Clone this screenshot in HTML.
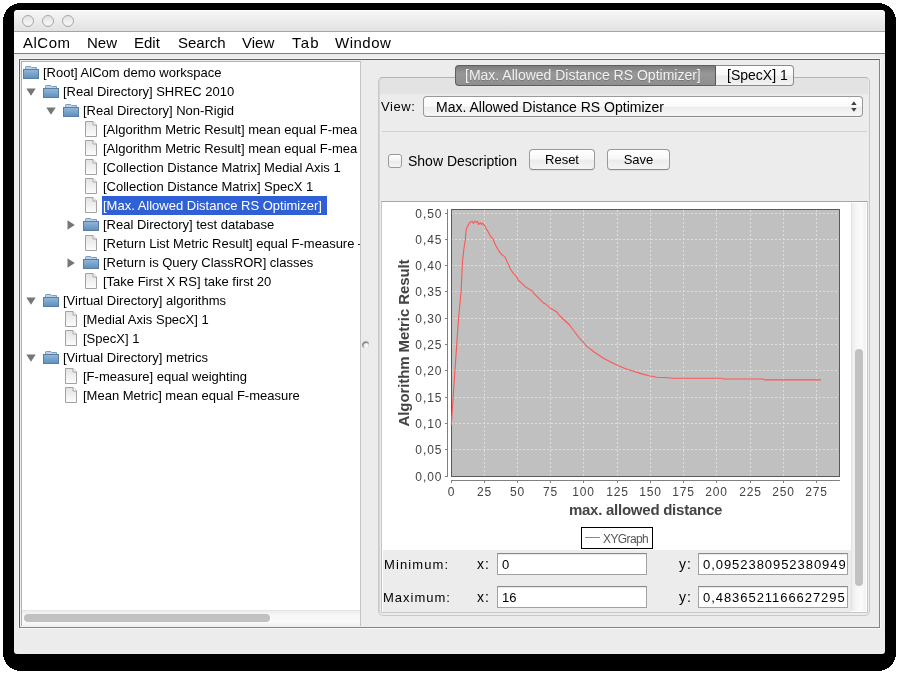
<!DOCTYPE html>
<html><head><meta charset="utf-8">
<style>
*{margin:0;padding:0;box-sizing:border-box}
html,body{width:899px;height:674px;overflow:hidden;background:#fff;font-family:"Liberation Sans",sans-serif;color:#000}
.a{position:absolute}
#shadow{left:3px;top:3px;width:893px;height:668px;background:#000;border-radius:13px}
#win{left:14px;top:10px;width:871px;height:644px;background:#ececec;border-radius:4px 4px 3px 3px;overflow:hidden}
#title{left:14px;top:10px;width:871px;height:21px;background:linear-gradient(#f7f7f7,#e1e1e1);border-radius:4px 4px 0 0;box-shadow:inset 0 1px 0 #fdfdfd}
#titleline{left:14px;top:31px;width:871px;height:1px;background:#a4a4a4}
.circ{width:12px;height:12px;border-radius:50%;border:1px solid #a6a6a6;background:linear-gradient(#e2e2e2,#f4f4f4 70%,#ececec)}
#menubar{left:14px;top:32px;width:871px;height:21px;background:#fff}
#menuline{left:14px;top:53px;width:871px;height:1px;background:#7e7e7e}
.menu{font-size:15px;top:34px;line-height:18px}
/* split pane */
#sp_hl{left:18px;top:58px;width:863px;height:571px;border:1px solid #f7f7f7}
#sp{left:19px;top:59px;width:861px;height:569px;border:1px solid #5e5e5e;border-right-color:#858585;border-bottom-color:#858585}
#tree_o{left:20px;top:60px;width:341px;height:567px;border:1px solid #f0f0f0;border-right:none}
#tree{left:21px;top:61px;width:340px;height:565px;border:1px solid #b0b0b0;border-right:1px solid #c4c4c4;background:#fff;overflow:hidden}
.row{position:absolute;height:19px;font-size:13px;line-height:19px;white-space:nowrap}
.txt{position:absolute;top:0;white-space:nowrap}
.sel{background:#3060d6}
.wt{color:#fff}

/* right */
#tp{left:378px;top:77px;width:492px;height:539px;border:1px solid #c8c8c8;border-top-color:#b4b4b4;border-radius:5px;background:#ececec;box-shadow:inset 1px 1px 0 #d6d6d6}
#tphead{left:380px;top:78px;width:488px;height:16px;background:#e3e3e3;border-radius:4px 4px 0 0}
.tab{top:65px;height:21px;font-size:14px;line-height:18px;text-align:left;white-space:nowrap}
#tab1{left:455px;width:261px;background:linear-gradient(#7d7d7d,#979797 40%,#8f8f8f);border:1px solid #5f5f5f;border-right:1px solid #555;border-radius:4px 0 0 4px;color:#f2f2f2;padding-left:9px;text-shadow:0 1px 0 #7a7a7a}
#tab2{left:716px;width:78px;background:linear-gradient(#fff,#f8f8f8 45%,#ebebeb 55%,#f2f2f2);border:1px solid #8a8a8a;border-left:none;border-radius:0 4px 4px 0;padding-left:11px}
.lbl{font-size:13px;line-height:16px;white-space:nowrap}
#combo{left:423px;top:96px;width:440px;height:21px;border:1px solid #999;border-bottom-color:#8a8a8a;border-radius:4px;background:linear-gradient(#fff,#fbfbfb 45%,#eeeeee 55%,#f6f6f6);box-shadow:0 1px 0 #f6f6f6}
#sep{left:382px;top:131px;width:485px;height:1px;background:#d2d2d2}
#chk{left:388px;top:154px;width:14px;height:14px;border:1px solid #9a9a9a;border-radius:3px;background:linear-gradient(#fff,#f3f3f3 50%,#e9e9e9 55%,#f7f7f7)}
.btn{top:149px;height:21px;border:1px solid #9a9a9a;border-bottom-color:#8a8a8a;box-shadow:0 1px 0 rgba(0,0,0,0.06);border-radius:4px;background:linear-gradient(#fff,#f8f8f8 45%,#ececec 55%,#f4f4f4);font-size:13px;line-height:19px;text-align:center}
#scr{left:381px;top:201px;width:487px;height:412px;border:1px solid #c6c6c6;border-top-color:#a6a6a6;background:#fff}
#chart{left:382px;top:202px;width:469px;height:348px;background:#fff}
#mm{left:383px;top:550px;width:468px;height:62px;background:#ececec}
#vtrack{left:851px;top:203px;width:15px;height:408px;background:linear-gradient(90deg,#ececec,#f6f6f6 30%,#fafafa 70%,#f0f0f0);border-left:1px solid #e2e2e2}
#vthumb{left:855px;top:349px;width:8px;height:237px;border-radius:4px;background:#c1c1c1}
.fld{height:22px;border:1px solid #a2a2a2;border-top-color:#8a8a8a;background:#fff;box-shadow:inset 0 1px 0 #e8e8e8;font-size:13px;line-height:20px;padding-left:4px;padding-top:1px;overflow:hidden;white-space:nowrap}
#htrack{left:22px;top:610px;width:338px;height:16px;background:linear-gradient(#ececec,#f7f7f7 30%,#fafafa 70%,#f1f1f1);border-top:1px solid #e4e4e4}
#hthumb{left:24px;top:614px;width:246px;height:8px;border-radius:4px;background:#c1c1c1}
.tl{font-size:12px;fill:#444;letter-spacing:0.9px}
.al{font-size:15px;font-weight:bold;fill:#444;letter-spacing:-0.25px}
.al2{letter-spacing:-0.1px}
.lg{font-size:12px;fill:#555;letter-spacing:-0.6px}
.fi{width:142px;overflow:hidden;letter-spacing:0.95px}
</style></head><body><div id="root" style="position:absolute;left:0;top:0;width:899px;height:674px;will-change:transform">
<svg class="a" style="left:0;top:0" width="899" height="674"><rect x="3" y="3" width="893" height="668" rx="18" ry="18" fill="#000" shape-rendering="crispEdges"/></svg>
<div class="a" id="win"></div>
<div class="a" id="title"></div>
<div class="a" id="titleline"></div>
<div class="a circ" style="left:22px;top:15px"></div>
<div class="a circ" style="left:42px;top:15px"></div>
<div class="a circ" style="left:62px;top:15px"></div>
<div class="a" id="menubar"></div>
<div class="a" id="menuline"></div>
<div class="a menu" style="left:23px;letter-spacing:0.5px">AlCom</div>
<div class="a menu" style="left:87px">New</div>
<div class="a menu" style="left:134px">Edit</div>
<div class="a menu" style="left:178px">Search</div>
<div class="a menu" style="left:242px">View</div>
<div class="a menu" style="left:292px;letter-spacing:1.2px">Tab</div>
<div class="a menu" style="left:335px;letter-spacing:0.5px">Window</div>

<div class="a" id="sp_hl"></div>
<div class="a" id="sp"></div>
<div class="a" id="tree_o"></div>
<div class="a" id="tree">
<!-- TREE -->
<svg width="0" height="0" style="position:absolute"><defs><linearGradient id="fg" x1="0" y1="0" x2="0" y2="1"><stop offset="0" stop-color="#94b7d8"/><stop offset="1" stop-color="#5c8fc0"/></linearGradient><linearGradient id="pg" x1="0" y1="0" x2="0" y2="1"><stop offset="0" stop-color="#e2e2e2"/><stop offset="1" stop-color="#fdfdfd"/></linearGradient></defs></svg>
<svg class="a" style="left:1px;top:4px" width="16" height="13"><path d="M2.5 3.5V1.2Q2.5 0.5 3.2 0.5H7.8L8.8 1.5H13.5V3.5Z" fill="#b9d2e8" stroke="#7b9cbc"/><rect x="0.5" y="3.5" width="15" height="9" fill="url(#fg)" stroke="#5b7d9e"/></svg>
<div class="row" style="left:21px;top:1px">[Root] AlCom demo workspace</div>
<svg class="a" style="left:4px;top:26px" width="10" height="8"><path d="M0.3 0.5H9.7L5 7.8Z" fill="#767676"/></svg>
<svg class="a" style="left:21px;top:23px" width="16" height="13"><path d="M2.5 3.5V1.2Q2.5 0.5 3.2 0.5H7.8L8.8 1.5H13.5V3.5Z" fill="#b9d2e8" stroke="#7b9cbc"/><rect x="0.5" y="3.5" width="15" height="9" fill="url(#fg)" stroke="#5b7d9e"/></svg>
<div class="row" style="left:41px;top:20px">[Real Directory] SHREC 2010</div>
<svg class="a" style="left:24px;top:45px" width="10" height="8"><path d="M0.3 0.5H9.7L5 7.8Z" fill="#767676"/></svg>
<svg class="a" style="left:41px;top:42px" width="16" height="13"><path d="M2.5 3.5V1.2Q2.5 0.5 3.2 0.5H7.8L8.8 1.5H13.5V3.5Z" fill="#b9d2e8" stroke="#7b9cbc"/><rect x="0.5" y="3.5" width="15" height="9" fill="url(#fg)" stroke="#5b7d9e"/></svg>
<div class="row" style="left:61px;top:39px">[Real Directory] Non-Rigid</div>
<svg class="a" style="left:63px;top:59px" width="12" height="16"><path d="M0.5 0.5H8L11.5 4V15.5H0.5Z" fill="url(#pg)" stroke="#a2a2a2"/><path d="M8 0.5V4H11.5" fill="#fff" stroke="#a2a2a2"/></svg>
<div class="row" style="left:81px;top:58px">[Algorithm Metric Result] mean equal F-mea</div>
<svg class="a" style="left:63px;top:78px" width="12" height="16"><path d="M0.5 0.5H8L11.5 4V15.5H0.5Z" fill="url(#pg)" stroke="#a2a2a2"/><path d="M8 0.5V4H11.5" fill="#fff" stroke="#a2a2a2"/></svg>
<div class="row" style="left:81px;top:77px">[Algorithm Metric Result] mean equal F-mea</div>
<svg class="a" style="left:63px;top:97px" width="12" height="16"><path d="M0.5 0.5H8L11.5 4V15.5H0.5Z" fill="url(#pg)" stroke="#a2a2a2"/><path d="M8 0.5V4H11.5" fill="#fff" stroke="#a2a2a2"/></svg>
<div class="row" style="left:81px;top:96px">[Collection Distance Matrix] Medial Axis 1</div>
<svg class="a" style="left:63px;top:116px" width="12" height="16"><path d="M0.5 0.5H8L11.5 4V15.5H0.5Z" fill="url(#pg)" stroke="#a2a2a2"/><path d="M8 0.5V4H11.5" fill="#fff" stroke="#a2a2a2"/></svg>
<div class="row" style="left:81px;top:115px">[Collection Distance Matrix] SpecX 1</div>
<svg class="a" style="left:63px;top:135px" width="12" height="16"><path d="M0.5 0.5H8L11.5 4V15.5H0.5Z" fill="url(#pg)" stroke="#a2a2a2"/><path d="M8 0.5V4H11.5" fill="#fff" stroke="#a2a2a2"/></svg>
<div class="a sel" style="left:80px;top:134px;width:225px;height:19px"></div>
<div class="row wt" style="left:81px;top:134px">[Max. Allowed Distance RS Optimizer]</div>
<svg class="a" style="left:45px;top:158px" width="8" height="10"><path d="M0.5 0.3V9.7L7.8 5Z" fill="#767676"/></svg>
<svg class="a" style="left:61px;top:156px" width="16" height="13"><path d="M2.5 3.5V1.2Q2.5 0.5 3.2 0.5H7.8L8.8 1.5H13.5V3.5Z" fill="#b9d2e8" stroke="#7b9cbc"/><rect x="0.5" y="3.5" width="15" height="9" fill="url(#fg)" stroke="#5b7d9e"/></svg>
<div class="row" style="left:81px;top:153px">[Real Directory] test database</div>
<svg class="a" style="left:63px;top:173px" width="12" height="16"><path d="M0.5 0.5H8L11.5 4V15.5H0.5Z" fill="url(#pg)" stroke="#a2a2a2"/><path d="M8 0.5V4H11.5" fill="#fff" stroke="#a2a2a2"/></svg>
<div class="row" style="left:81px;top:172px">[Return List Metric Result] equal F-measure – 1</div>
<svg class="a" style="left:45px;top:196px" width="8" height="10"><path d="M0.5 0.3V9.7L7.8 5Z" fill="#767676"/></svg>
<svg class="a" style="left:61px;top:194px" width="16" height="13"><path d="M2.5 3.5V1.2Q2.5 0.5 3.2 0.5H7.8L8.8 1.5H13.5V3.5Z" fill="#b9d2e8" stroke="#7b9cbc"/><rect x="0.5" y="3.5" width="15" height="9" fill="url(#fg)" stroke="#5b7d9e"/></svg>
<div class="row" style="left:81px;top:191px">[Return is Query ClassROR] classes</div>
<svg class="a" style="left:63px;top:211px" width="12" height="16"><path d="M0.5 0.5H8L11.5 4V15.5H0.5Z" fill="url(#pg)" stroke="#a2a2a2"/><path d="M8 0.5V4H11.5" fill="#fff" stroke="#a2a2a2"/></svg>
<div class="row" style="left:81px;top:210px">[Take First X RS] take first 20</div>
<svg class="a" style="left:4px;top:235px" width="10" height="8"><path d="M0.3 0.5H9.7L5 7.8Z" fill="#767676"/></svg>
<svg class="a" style="left:21px;top:232px" width="16" height="13"><path d="M2.5 3.5V1.2Q2.5 0.5 3.2 0.5H7.8L8.8 1.5H13.5V3.5Z" fill="#b9d2e8" stroke="#7b9cbc"/><rect x="0.5" y="3.5" width="15" height="9" fill="url(#fg)" stroke="#5b7d9e"/></svg>
<div class="row" style="left:41px;top:229px">[Virtual Directory] algorithms</div>
<svg class="a" style="left:43px;top:249px" width="12" height="16"><path d="M0.5 0.5H8L11.5 4V15.5H0.5Z" fill="url(#pg)" stroke="#a2a2a2"/><path d="M8 0.5V4H11.5" fill="#fff" stroke="#a2a2a2"/></svg>
<div class="row" style="left:61px;top:248px">[Medial Axis SpecX] 1</div>
<svg class="a" style="left:43px;top:268px" width="12" height="16"><path d="M0.5 0.5H8L11.5 4V15.5H0.5Z" fill="url(#pg)" stroke="#a2a2a2"/><path d="M8 0.5V4H11.5" fill="#fff" stroke="#a2a2a2"/></svg>
<div class="row" style="left:61px;top:267px">[SpecX] 1</div>
<svg class="a" style="left:4px;top:292px" width="10" height="8"><path d="M0.3 0.5H9.7L5 7.8Z" fill="#767676"/></svg>
<svg class="a" style="left:21px;top:289px" width="16" height="13"><path d="M2.5 3.5V1.2Q2.5 0.5 3.2 0.5H7.8L8.8 1.5H13.5V3.5Z" fill="#b9d2e8" stroke="#7b9cbc"/><rect x="0.5" y="3.5" width="15" height="9" fill="url(#fg)" stroke="#5b7d9e"/></svg>
<div class="row" style="left:41px;top:286px">[Virtual Directory] metrics</div>
<svg class="a" style="left:43px;top:306px" width="12" height="16"><path d="M0.5 0.5H8L11.5 4V15.5H0.5Z" fill="url(#pg)" stroke="#a2a2a2"/><path d="M8 0.5V4H11.5" fill="#fff" stroke="#a2a2a2"/></svg>
<div class="row" style="left:61px;top:305px">[F-measure] equal weighting</div>
<svg class="a" style="left:43px;top:325px" width="12" height="16"><path d="M0.5 0.5H8L11.5 4V15.5H0.5Z" fill="url(#pg)" stroke="#a2a2a2"/><path d="M8 0.5V4H11.5" fill="#fff" stroke="#a2a2a2"/></svg>
<div class="row" style="left:61px;top:324px">[Mean Metric] mean equal F-measure</div>
</div>

<!-- RIGHT -->
<div class="a" style="left:362px;top:341px;width:7px;height:7px;border-radius:50%;background:radial-gradient(circle at 62% 68%,#fafafa 0,#f2f2f2 30%,#7a7a7a 58%,rgba(236,236,236,0) 85%)"></div>
<div class="a" id="htrack"></div>
<div class="a" id="hthumb"></div>
<div class="a" id="tp"></div>
<div class="a" id="tphead"></div>
<div class="a tab" id="tab1">[Max. Allowed Distance RS Optimizer]</div>
<div class="a tab" id="tab2">[SpecX] 1</div>
<div class="a lbl" style="left:381px;top:99px;letter-spacing:0.6px">View:</div>
<div class="a" id="combo"></div>
<div class="a lbl" style="left:436px;top:99px;font-size:14px">Max. Allowed Distance RS Optimizer</div>
<svg class="a" style="left:850px;top:100px" width="8" height="13"><path d="M1.2 5L3.9 1.3L6.6 5Z M1.2 8L3.9 11.8L6.6 8Z" fill="#404040"/></svg>
<div class="a" id="sep"></div>
<div class="a" id="chk"></div>
<div class="a lbl" style="left:408px;top:153px;font-size:14px">Show Description</div>
<div class="a btn" style="left:529px;width:66px">Reset</div>
<div class="a btn" style="left:607px;width:63px">Save</div>
<div class="a" id="scr"></div>
<div class="a" id="chart">
<svg class="a" style="left:0;top:0" width="469" height="348" viewBox="382 202 469 348">
<rect x="451" y="209" width="389" height="268" fill="#c0c0c0"/>
<path d="M484.5 210V476M517.5 210V476M550.5 210V476M583.5 210V476M617.5 210V476M650.5 210V476M683.5 210V476M716.5 210V476M750.5 210V476M783.5 210V476M816.5 210V476" stroke="#dedede" stroke-width="1" stroke-dasharray="2 2" fill="none"/>
<path d="M451 449.5H839M451 423.5H839M451 397.5H839M451 370.5H839M451 344.5H839M451 318.5H839M451 291.5H839M451 265.5H839M451 239.5H839M451 213.5H839" stroke="#dedede" stroke-width="1" stroke-dasharray="2 2" fill="none"/>
<rect x="451.5" y="209.5" width="388" height="267" fill="none" stroke="#5a5a5a" stroke-width="1"/>
<path d="M447.5 209V477M451 480.5H840" stroke="#808080" stroke-width="1" fill="none"/>
<path d="M445 476.5H447M445 449.5H447M445 423.5H447M445 397.5H447M445 370.5H447M445 344.5H447M445 318.5H447M445 291.5H447M445 265.5H447M445 239.5H447M445 213.5H447M451.5 481V483M484.5 481V483M517.5 481V483M550.5 481V483M583.5 481V483M617.5 481V483M650.5 481V483M683.5 481V483M716.5 481V483M750.5 481V483M783.5 481V483M816.5 481V483" stroke="#808080" stroke-width="1" fill="none"/>
<polyline points="451.3,425.5 453.5,392.0 456.0,355.0 458.5,319.0 461.2,290.0 462.5,261.4 464.0,248.0 465.0,242.0 466.3,228.9 468.3,224.9 469.7,222.5 472.1,221.3 473.5,223.5 474.6,221.3 476.4,222.3 477.5,221.4 478.4,224.5 480.4,222.7 481.5,224.5 482.6,223.2 484.6,225.6 486.1,228.5 488.8,232.9 490.6,236.5 492.6,238.3 494.2,242.0 495.5,245.0 498.3,250.1 501.9,254.8 504.8,256.6 507.2,262.0 510.8,269.7 513.7,273.8 516.7,276.8 518.5,280.4 525.6,286.9 532.1,291.0 535.1,294.6 538.7,298.2 543.4,302.9 545.8,304.1 550.5,308.2 556.5,311.8 560.0,316.0 564.2,320.0 569.6,325.0 574.0,331.0 578.9,337.5 586.7,346.1 594.5,352.3 603.9,358.5 613.2,363.2 617.9,365.5 625.0,368.5 633.5,371.3 641.0,373.6 649.0,375.7 656.8,377.2 669.3,377.7 672.0,378.2 721.2,378.2 724.1,379.0 763.1,379.0 764.6,379.9 821.0,379.9" fill="none" stroke="#ff5555" stroke-width="1.1" stroke-linejoin="round"/>
<text x="442.3" y="480.6" text-anchor="end" class="tl">0,00</text>
<text x="442.3" y="453.6" text-anchor="end" class="tl">0,05</text>
<text x="442.3" y="427.6" text-anchor="end" class="tl">0,10</text>
<text x="442.3" y="401.6" text-anchor="end" class="tl">0,15</text>
<text x="442.3" y="374.6" text-anchor="end" class="tl">0,20</text>
<text x="442.3" y="348.6" text-anchor="end" class="tl">0,25</text>
<text x="442.3" y="322.6" text-anchor="end" class="tl">0,30</text>
<text x="442.3" y="295.6" text-anchor="end" class="tl">0,35</text>
<text x="442.3" y="269.6" text-anchor="end" class="tl">0,40</text>
<text x="442.3" y="243.6" text-anchor="end" class="tl">0,45</text>
<text x="442.3" y="217.6" text-anchor="end" class="tl">0,50</text>
<text x="451.5" y="495.6" text-anchor="middle" class="tl">0</text>
<text x="484.5" y="495.6" text-anchor="middle" class="tl">25</text>
<text x="517.5" y="495.6" text-anchor="middle" class="tl">50</text>
<text x="550.5" y="495.6" text-anchor="middle" class="tl">75</text>
<text x="583.5" y="495.6" text-anchor="middle" class="tl">100</text>
<text x="617.5" y="495.6" text-anchor="middle" class="tl">125</text>
<text x="650.5" y="495.6" text-anchor="middle" class="tl">150</text>
<text x="683.5" y="495.6" text-anchor="middle" class="tl">175</text>
<text x="716.5" y="495.6" text-anchor="middle" class="tl">200</text>
<text x="750.5" y="495.6" text-anchor="middle" class="tl">225</text>
<text x="783.5" y="495.6" text-anchor="middle" class="tl">250</text>
<text x="816.5" y="495.6" text-anchor="middle" class="tl">275</text>
<text x="645.5" y="515.3" text-anchor="middle" class="al">max. allowed distance</text>
<text transform="translate(409.2 343) rotate(-90)" x="0" y="0" text-anchor="middle" class="al al2">Algorithm Metric Result</text>
<rect x="581.5" y="527.5" width="71" height="21" fill="#fff" stroke="#000" stroke-width="1"/>
<path d="M585 537.5H600" stroke="#ff5555" stroke-width="1"/>
<text x="603" y="542.6" class="lg">XYGraph</text>
</svg>
</div>
<div class="a" id="mm"></div>
<div class="a lbl" style="left:384px;top:557px;letter-spacing:1.1px">Minimum:</div>
<div class="a lbl" style="left:383px;top:590px;letter-spacing:1.0px">Maximum:</div>
<div class="a lbl" style="left:477px;top:556px;font-size:14px;letter-spacing:1px">x:</div>
<div class="a lbl" style="left:477px;top:589px;font-size:14px;letter-spacing:1px">x:</div>
<div class="a lbl" style="left:679px;top:556px;font-size:14px;letter-spacing:1px">y:</div>
<div class="a lbl" style="left:679px;top:589px;font-size:14px;letter-spacing:1px">y:</div>
<div class="a fld" style="left:497px;top:553px;width:150px">0</div>
<div class="a fld" style="left:497px;top:586px;width:150px">16</div>
<div class="a fld" style="left:698px;top:553px;width:150px"><div class="fi">0,09523809523809494</div></div>
<div class="a fld" style="left:698px;top:586px;width:150px"><div class="fi">0,48365211666272950</div></div>
<div class="a" id="vtrack"></div>
<div class="a" id="vthumb"></div>

</div></body></html>
